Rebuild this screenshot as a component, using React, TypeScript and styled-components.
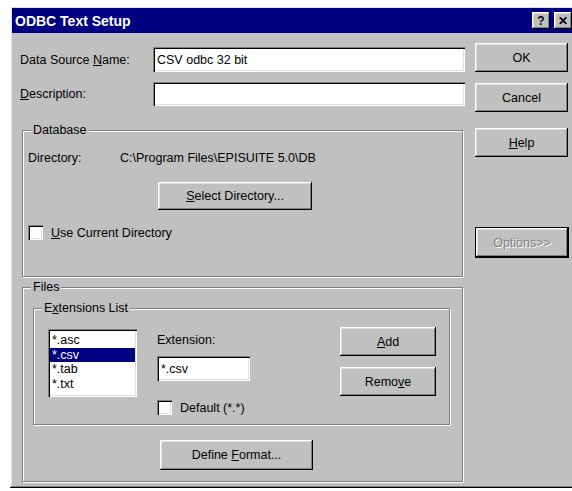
import styled, { createGlobalStyle } from "styled-components";

const GlobalStyle = createGlobalStyle`
  html, body {
    margin: 0;
    padding: 0;
    background: #fff;
    overflow: hidden;
  }
  body {
    font-family: "Liberation Sans", Arial, sans-serif;
    font-size: 12.5px;
    color: #000;
  }
`;

const raised = `
  box-shadow: inset -1px -1px 0 #000, inset 1px 1px 0 #fff,
    inset -2px -2px 0 #808080, inset 2px 2px 0 #dfdfdf;
`;

const sunken = `
  box-shadow: inset 1px 1px 0 #808080, inset 2px 2px 0 #000,
    inset -1px -1px 0 #fff, inset -2px -2px 0 #dfdfdf;
`;

const Window = styled.div`
  margin: 6px 0 0 10px;
  width: 565px;
  height: 482px;
  box-sizing: border-box;
  padding: 2px;
  background: #c0c0c0;
  ${raised}
  display: flex;
  flex-direction: column;
`;

const TitleBar = styled.div`
  height: 25px;
  flex: none;
  background: #000080;
  display: flex;
  align-items: center;
  padding: 0 1px 0 3px;
`;

const Title = styled.span`
  color: #fff;
  font-weight: bold;
  font-size: 14px;
  flex: 1;
`;

const TitleButton = styled.div<{ $gap?: number }>`
  width: 18px;
  height: 17px;
  margin-left: ${p => p.$gap ?? 0}px;
  background: #c0c0c0;
  ${raised}
  display: flex;
  align-items: center;
  justify-content: center;
  font-weight: bold;
  font-size: 12px;
  line-height: 1;
`;

const Body = styled.div`
  flex: 1;
  display: flex;
`;

const FormColumn = styled.div`
  width: 455px;
  padding-top: 14px;
  display: flex;
  flex-direction: column;
`;

const ActionColumn = styled.div`
  width: 93px;
  margin-left: 8px;
  padding-top: 10px;
  display: flex;
  flex-direction: column;
`;

const FieldRow = styled.div<{ $top?: number; $h: number }>`
  display: flex;
  align-items: center;
  height: ${p => p.$h}px;
  margin-top: ${p => p.$top ?? 0}px;
`;

const FieldLabel = styled.label<{ $w: number; $pad?: number }>`
  width: ${p => p.$w}px;
  padding-left: ${p => p.$pad ?? 0}px;
  flex: none;
  white-space: nowrap;
`;

const TextBox = styled.div<{ $w: number; $h: number }>`
  width: ${p => p.$w}px;
  height: ${p => p.$h}px;
  box-sizing: border-box;
  background: #fff;
  ${sunken}
  padding: 0 4px;
  display: flex;
  align-items: center;
  white-space: nowrap;
`;

const Button = styled.div<{ $w: number; $h: number; $top?: number; $left?: number; $default?: boolean; $disabled?: boolean }>`
  width: ${p => p.$w}px;
  height: ${p => p.$h}px;
  margin-top: ${p => p.$top ?? 0}px;
  margin-left: ${p => p.$left ?? 0}px;
  box-sizing: border-box;
  flex: none;
  background: #c0c0c0;
  ${raised}
  border: ${p => (p.$default ? "1px solid #000" : "none")};
  display: flex;
  align-items: center;
  justify-content: center;
  white-space: nowrap;
  color: ${p => (p.$disabled ? "#808080" : "#000")};
  text-shadow: ${p => (p.$disabled ? "1px 1px 0 #fff" : "none")};
`;

const Group = styled.div<{ $top: number; $left: number; $w: number; $h: number }>`
  position: relative;
  margin-top: ${p => p.$top}px;
  margin-left: ${p => p.$left}px;
  width: ${p => p.$w}px;
  height: ${p => p.$h}px;
  box-sizing: border-box;
  border: 1px solid #808080;
  box-shadow: inset 1px 1px 0 #fff, 1px 1px 0 #fff;
`;

const Caption = styled.span`
  position: absolute;
  top: -8px;
  left: 8px;
  padding: 0 2px;
  line-height: 15px;
  background: #c0c0c0;
`;

const DirRow = styled.div`
  display: flex;
  margin-top: 20px;
  padding-left: 5px;
  line-height: 14px;
  white-space: nowrap;
`;

const DirLabel = styled.span`
  width: 92px;
`;

const CheckRow = styled.div<{ $top: number; $left?: number }>`
  display: flex;
  align-items: center;
  margin-top: ${p => p.$top}px;
  margin-left: ${p => p.$left ?? 0}px;
  height: 15px;
  white-space: nowrap;
`;

const CheckBox = styled.span`
  width: 15px;
  height: 15px;
  box-sizing: border-box;
  background: #fff;
  ${sunken}
  margin-right: 8px;
  flex: none;
`;

const ExtensionArea = styled.div`
  display: flex;
  align-items: flex-start;
  padding: 20px 0 0 14px;
`;

const ListBox = styled.div`
  width: 89px;
  height: 68px;
  box-sizing: border-box;
  background: #fff;
  ${sunken}
  padding: 4px 2px 0 2px;
  display: flex;
  flex-direction: column;
`;

const ListItem = styled.div<{ $selected?: boolean }>`
  height: 14.5px;
  line-height: 14.5px;
  padding-left: 2px;
  background: ${p => (p.$selected ? "#000080" : "transparent")};
  color: ${p => (p.$selected ? "#fff" : "#000")};
`;

const ExtensionColumn = styled.div`
  margin-left: 20px;
  padding-top: 4px;
  display: flex;
  flex-direction: column;
`;

const StackedLabel = styled.span`
  line-height: 14px;
  margin-bottom: 9px;
`;

const ButtonStack = styled.div`
  margin-left: 90px;
  display: flex;
  flex-direction: column;
`;

const extensions = ["*.asc", "*.csv", "*.tab", "*.txt"];

export default function App() {
  return (
    <>
      <GlobalStyle />
      <Window>
        <TitleBar>
          <Title>ODBC Text Setup</Title>
          <TitleButton>?</TitleButton>
          <TitleButton $gap={4}>✕</TitleButton>
        </TitleBar>
        <Body>
          <FormColumn>
            <FieldRow $h={25}>
              <FieldLabel $w={133} $pad={8}>
                Data Source <u>N</u>ame:
              </FieldLabel>
              <TextBox $w={312} $h={25}>CSV odbc 32 bit</TextBox>
            </FieldRow>
            <FieldRow $h={24} $top={10}>
              <FieldLabel $w={133} $pad={8}>
                <u>D</u>escription:
              </FieldLabel>
              <TextBox $w={312} $h={24} />
            </FieldRow>

            <Group $top={24} $left={10} $w={441} $h={147}>
              <Caption>Database</Caption>
              <DirRow>
                <DirLabel>Directory:</DirLabel>
                <span>C:\Program Files\EPISUITE 5.0\DB</span>
              </DirRow>
              <Button $w={154} $h={28} $top={17} $left={135}>
                <span>
                  <u>S</u>elect Directory...
                </span>
              </Button>
              <CheckRow $top={15} $left={5}>
                <CheckBox />
                <span>
                  <u>U</u>se Current Directory
                </span>
              </CheckRow>
            </Group>

            <Group $top={10} $left={10} $w={441} $h={195}>
              <Caption>Files</Caption>
              <Group $top={20} $left={10} $w={417} $h={117}>
                <Caption>
                  E<u>x</u>tensions List
                </Caption>
                <ExtensionArea>
                  <ListBox>
                    {extensions.map(ext => (
                      <ListItem key={ext} $selected={ext === "*.csv"}>
                        {ext}
                      </ListItem>
                    ))}
                  </ListBox>
                  <ExtensionColumn>
                    <StackedLabel>Extension:</StackedLabel>
                    <TextBox $w={93} $h={25}>*.csv</TextBox>
                    <CheckRow $top={19}>
                      <CheckBox />
                      <span>Default (*.*)</span>
                    </CheckRow>
                  </ExtensionColumn>
                  <ButtonStack>
                    <Button $w={96} $h={29} $top={-2}>
                      <span>
                        <u>A</u>dd
                      </span>
                    </Button>
                    <Button $w={96} $h={29} $top={11}>
                      <span>
                        Remo<u>v</u>e
                      </span>
                    </Button>
                  </ButtonStack>
                </ExtensionArea>
              </Group>
              <Button $w={153} $h={30} $top={15} $left={137}>
                <span>
                  Define <u>F</u>ormat...
                </span>
              </Button>
            </Group>
          </FormColumn>

          <ActionColumn>
            <Button $w={93} $h={29}>OK</Button>
            <Button $w={93} $h={29} $top={11}>
              Cancel
            </Button>
            <Button $w={93} $h={29} $top={16}>
              <span>
                <u>H</u>elp
              </span>
            </Button>
            <Button $w={94} $h={31} $top={70} $default $disabled>
              Options&gt;&gt;
            </Button>
          </ActionColumn>
        </Body>
      </Window>
    </>
  );
}
